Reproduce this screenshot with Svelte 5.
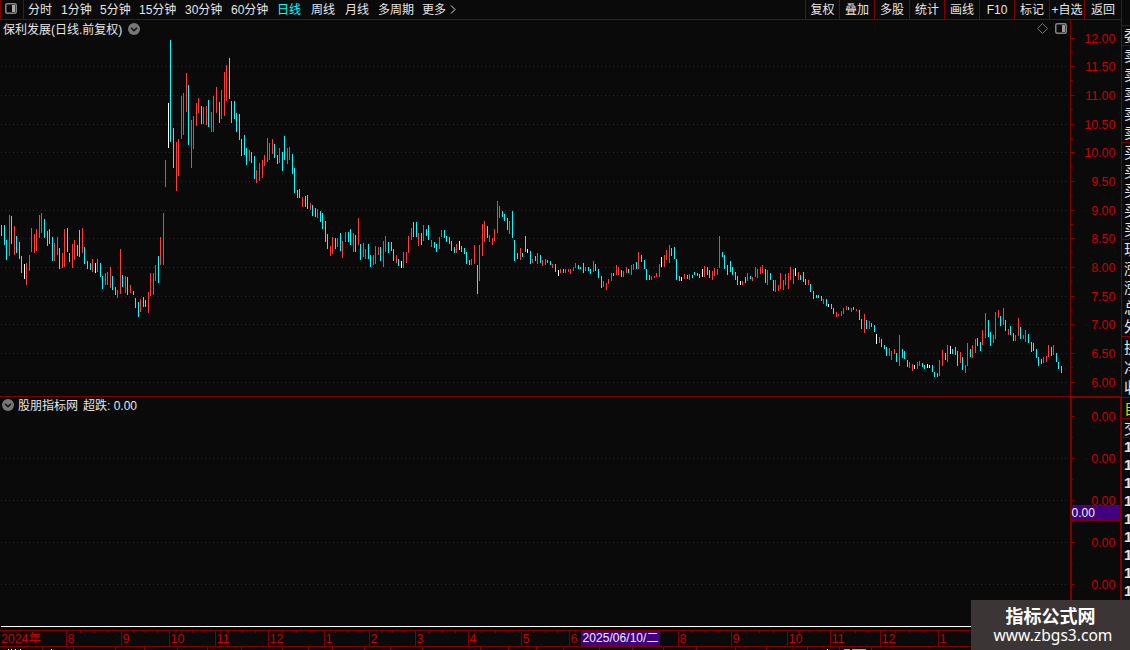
<script lang="ts">
	type Tone = 'u' | 'd' | 'w';

	const periods = [
		{ name: '分时', width: 24, gap: 9 },
		{ name: '1分钟', width: 31, gap: 8 },
		{ name: '5分钟', width: 31, gap: 8 },
		{ name: '15分钟', width: 38, gap: 8 },
		{ name: '30分钟', width: 38, gap: 8 },
		{ name: '60分钟', width: 38, gap: 8 },
		{ name: '日线', width: 24, gap: 10 },
		{ name: '周线', width: 24, gap: 10 },
		{ name: '月线', width: 24, gap: 9 },
		{ name: '多周期', width: 36, gap: 8 },
		{ name: '更多', width: 24, gap: 4 }
	];
	let period = $state('日线');

	const tools = ['复权', '叠加', '多股', '统计', '画线', 'F10', '标记', '+自选', '返回'];

	// high-low per day in chart pixels, then u(p) / d(own) / w(unchanged)
	const series = `
		225-236d 225-245d 240-260d 215-256u 216-244d 226-255u 236-253d 242-259d 256-273d 264-279w
		263-285u 255-271u 228-252u 234-253u 229-251u 215-238u 213-233u 219-238d 231-246d 229-244d
		237-261d 243-261u 237-255u 248-269d 253-268u 229-267u 228-252d 253-262d 244-268u 240-260u
		245-256d 230-257d 228-253u 247-264d 261-269d 263-270d 259-272u 263-273w 259-272u 263-277d
		276-289d 273-285u 272-285u 267-288u 276-290d 287-295d 290-298u 249-294u 275-287d 276-293u
		277-295d 285-293u 291-295d 298-308d 302-317d 299-312u 297-307d 300-307d 292-313u 273-296u
		273-295u 265-281u 256-283d 237-265u 213-265u 160-187u 103-148w 40-142d 128-168d 142-191u
		139-176u 96-139u 93-135u 73-112u 85-145d 120-168u 116-149u 103-126u 98-113u 106-124d
		107-124u 106-125u 100-127d 112-132u 96-132u 87-113u 102-123d 90-119u 72-116u 65-101u
		58-99d 101-123d 101-119d 113-132d 114-140d 139-156d 135-155d 148-165d 150-161u 152-163d
		156-179d 170-183u 163-181u 160-178u 155-166u 138-162u 143-160u 139-154u 144-158d 155-164d
		148-163u 152-171d 136-160d 148-164u 147-160u 154-174d 168-193d 190-198d 189-198d 197-207u
		196-207d 195-209d 203-210u 205-216d 208-217d 209-218u 211-222d 213-229d 221-242d 234-249d
		246-256u 237-254u 238-249d 238-247u 233-251d 241-258u 232-242u 232-242d 229-245d 233-252u
		235-252d 218-245u 244-260d 243-257u 249-259u 244-259d 255-267d 255-265u 246-264u 247-255u
		247-261d 241-267u 236-252u 242-253d 242-251d 249-261d 255-263u 259-266d 261-268w 252-268u
		252-263u 236-253u 228-240u 222-237d 222-237d 233-246u 233-245d 225-241u 229-236d 225-240d
		240-247u 242-248d 244-252d 237-249u 230-237u 230-238d 236-242d 237-244d 241-251d 247-253d
		244-253u 241-250w 246-252d 248-254d 252-264d 260-265d 259-265u 245-264u 265-294d 245-281u
		224-256u 221-242u 226-238d 235-242u 238-245u 229-241u 201-233u 206-218u 211-217d 214-221d
		218-230d 221-234u 211-238d 240-261d 253-259d 248-260u 253-257d 236-252d 249-253w 251-264d
		259-263u 256-261d 253-264u 255-263d 260-266u 259-265u 260-263d 261-265d 264-268u 264-272d
		270-276w 269-273u 269-273d 269-273u 269-272u 269-274u 267-271u 263-268u 265-269d 267-269d
		263-273d 267-271u 267-271d 269-274d 261-272u 264-271d 269-278d 276-288d 281-287u 283-290u
		279-284u 273-281u 273-276d 265-275u 267-275u 270-277d 271-277u 267-273u 269-273d 265-275u
		264-270u 262-269d 252-269u 255-262d 260-269d 269-280d 275-280d 276-280u 276-278u 273-277u
		264-277u 257-267w 255-267u 250-260u 245-263u 248-256d 247-259d 259-280d 276-281d 277-281w
		274-279u 275-279d 274-280u 275-278d 272-275d 273-276d 274-278d 269-277w 266-277u 267-275d
		270-278d 271-280u 268-276u 269-275u 236-268u 252-257d 255-269d 265-275d 261-272d 267-275d
		272-280d 276-285d 281-285w 281-285u 277-283d 273-281u 276-279d 277-281u 267-277u 269-278u
		267-274u 265-273u 269-283d 270-285u 273-280d 280-291d 280-292u 285-291u 273-289u 280-290u
		274-285u 273-289u 267-280u 269-284u 268-276w 272-280u 275-280d 272-282d 279-285d 280-285u
		284-292d 291-299d 295-298d 295-298d 296-301d 299-304u 299-306d 304-307w 304-309d 308-314d
		312-317u 314-316u 311-316u 308-314u 306-310u 307-310d 308-312u 307-310d 309-311u 310-320d
		319-329d 314-333u 320-329d 321-329u 323-327d 325-332d 334-344w 337-343u 339-347d 345-349d
		347-356d 348-356u 351-360u 349-354u 353-362d 335-366u 349-358d 351-359d 360-367d 362-368u
		364-371u 365-369w 362-369u 361-366u 363-367d 365-369d 364-368w 365-368w 365-372d 372-377d
		373-377d 360-376u 350-366u 353-360d 345-362u 346-354w 349-354d 347-355d 351-366d 352-363u
		357-370d 365-373u 343-366u 349-357d 345-358u 339-353u 338-346d 342-351d 330-345u 313-338u
		320-337d 332-346d 335-343u 312-339u 310-318u 316-326d 308-325u 320-331d 329-335u 326-335d
		333-341d 335-341u 318-336u 327-339d 335-339u 330-342u 334-343d 342-352d 343-351d 349-358d
		357-366d 359-364d 357-363u 356-362u 345-357u 347-356d 345-355u 353-362d 362-369d 366-373d`;

	const bars = series.trim().split(/\s+/).map((item, i) => {
		const [high, low] = item.slice(0, -1).split('-').map(Number);
		return {
			x: Math.floor(1.475 + i * 2.52967),
			y: high - 20,
			height: low - high,
			tone: item.slice(-1) as Tone
		};
	});

	const prices = [38, 66, 95, 124, 152, 181, 210, 238, 267, 296, 324, 353, 382].map((y, i) => ({
		y: y - 20,
		label: (12 - i * 0.5).toFixed(2)
	}));
	const levels = [19, 61, 103, 145, 187];

	const months = [
		{ x: 66, label: '8' },
		{ x: 121, label: '9' },
		{ x: 169, label: '10' },
		{ x: 215, label: '11' },
		{ x: 268, label: '12' },
		{ x: 324, label: '1' },
		{ x: 369, label: '2' },
		{ x: 415, label: '3' },
		{ x: 468, label: '4' },
		{ x: 521, label: '5' },
		{ x: 569, label: '6' },
		{ x: 678, label: '8' },
		{ x: 731, label: '9' },
		{ x: 787, label: '10' },
		{ x: 830, label: '11' },
		{ x: 880, label: '12' },
		{ x: 938, label: '1' }
	];
	const weekTicks = months.slice(0, -1).flatMap((m, i) => {
		const step = (months[i + 1].x - m.x) / 4;
		return [1, 2, 3].map((n) => Math.round(m.x + step * n));
	});
	const footCells = [42, 73, 115, 144, 177, 207, 241, 282, 308, 332, 364, 390, 422, 480, 508, 536, 563, 599, 632, 663, 696, 735, 766, 807, 839, 871];

	const quoteGroups = [
		{ rows: ['委'], height: 20 },
		{ rows: ['卖', '卖', '卖', '卖', '卖'], height: 97 },
		{ rows: ['买', '买', '买', '买', '买'], height: 97 },
		{ rows: ['现', '涨', '涨', '总', '外'], height: 97 },
		{ rows: ['换', '净', '收'], height: 61 }
	];
</script>

<div class="app">
	<div class="left">
		<header>
			<div class="layout">
				<svg width="12" height="11" viewBox="0 0 12 11">
					<rect x="0.75" y="0.75" width="10.5" height="9.5" rx="1.5" fill="none" stroke="#858585" stroke-width="1.5" />
					<rect x="7" y="2" width="3" height="7" fill="#aaa" />
				</svg>
			</div>
			<nav>
				{#each periods as p}
					<button
						class:active={period === p.name}
						style="width: {p.width}px; margin-right: {p.gap}px"
						onclick={() => (period = p.name)}>{p.name}</button
					>
				{/each}
				<svg width="6" height="9" viewBox="0 0 6 9"><path d="M1 0.5L5 4.5L1 8.5" fill="none" stroke="#ddd" /></svg>
			</nav>
			<div class="tools">
				{#each tools as tool}
					<button>{tool}</button>
				{/each}
			</div>
		</header>

		<div class="panel price">
			<div class="plot">
				<div class="title">
					<span class="name">保利发展(日线.前复权)</span>
					<svg width="12" height="12" viewBox="0 0 12 12">
						<circle cx="6" cy="6" r="6" fill="#777" />
						<path d="M3 4.7L6 7.7L9 4.7" fill="none" stroke="#111" stroke-width="1.5" />
					</svg>
					<svg class="corner" width="30" height="12" viewBox="0 0 30 12">
						<path d="M5.5 0.5L10.5 5.5L5.5 10.5L0.5 5.5Z" fill="none" stroke="#777" />
						<rect x="18.75" y="0.75" width="10.5" height="9.5" rx="1.5" fill="none" stroke="#858585" stroke-width="1.5" />
						<rect x="25" y="2" width="3" height="7" fill="#999" />
					</svg>
				</div>
				<svg class="chart" width="1070" height="376" shape-rendering="crispEdges">
					{#each prices.slice(1) as p}
						<line class="grid" x1="1" x2="1067" y1={p.y + 0.5} y2={p.y + 0.5} />
					{/each}
					{#each bars as bar}
						<rect class={bar.tone} x={bar.x} y={bar.y} width="1" height={bar.height} />
					{/each}
				</svg>
			</div>
			<svg class="axis" width="51" height="376" shape-rendering="crispEdges">
				<rect width="1" height="376" />
				{#each prices as p, i}
					<rect x="1" y={p.y} width="4" height="1" />
					{#if i < prices.length - 1}
						<rect x="1" y={p.y + 14} width="2" height="1" />
					{/if}
					<text x="45.5" y={p.y + 5} text-anchor="end">{p.label}</text>
				{/each}
			</svg>
		</div>

		<div class="panel indicator">
			<div class="plot">
				<div class="title">
					<svg width="12" height="12" viewBox="0 0 12 12">
						<circle cx="6" cy="6" r="6" fill="#777" />
						<path d="M3 4.7L6 7.7L9 4.7" fill="none" stroke="#111" stroke-width="1.5" />
					</svg>
					<span class="source">股朋指标网</span>
					<span>超跌: 0.00</span>
				</div>
				<svg class="chart" width="1070" height="233" shape-rendering="crispEdges">
					{#each levels.slice(1) as y}
						<line class="grid" x1="1" x2="1067" y1={y + 0.5} y2={y + 0.5} />
					{/each}
					<rect x="1" y="229" width="1069" height="1" fill="#fff" />
				</svg>
			</div>
			<svg class="axis" width="51" height="233" shape-rendering="crispEdges">
				<rect width="2" height="233" />
				<rect width="51" height="1" />
				<rect x="50" width="1" height="233" />
				{#each levels as y}
					<rect x="2" {y} width="3" height="1" />
					<rect x="2" y={y + 21} width="1" height="1" />
					<text x="45.5" y={y + 5} text-anchor="end">0.00</text>
				{/each}
				<rect x="1" y="108" width="49" height="16" fill="#400080" />
				<rect x="1" y="108" width="49" height="1" />
				<rect x="1" y="123" width="49" height="1" />
				<text class="current" x="1.5" y="120">0.00</text>
			</svg>
		</div>

		<svg class="dates" width="1121" height="20" shape-rendering="crispEdges">
			<rect width="1121" height="1" />
			<rect y="16" width="1121" height="1" />
			<text x="1" y="13" textLength="40">2024年</text>
			{#each months as m}
				<rect x={m.x} y="1" width="1" height="15" />
				<text x={m.x + 1.5} y="13">{m.label}</text>
			{/each}
			{#each weekTicks as x}
				<rect {x} y="1" width="1" height="2" />
			{/each}
			{#each footCells as x}
				<rect {x} y="17" width="1" height="3" />
			{/each}
			<rect x="581" y="1" width="79" height="15" fill="#400080" />
			<text class="current" x="582.5" y="12" textLength="76">2025/06/10/二</text>
			<path d="M8 19.5h1M11 19.5h1M15 19.5h1M20 19.5h1M51 19.5h1M827 19.5h1" stroke="#fff" />
			<path d="M844 19.5h6M852 19.5h14" stroke="#00f0f0" />
		</svg>
	</div>

	<aside>
		{#each quoteGroups as group}
			<div class="group" style="height: {group.height}px">
				{#each group.rows as row}
					<span>{row}</span>
				{/each}
			</div>
		{/each}
		<div class="group self"><span>自</span></div>
		<div class="group trade"><span>交</span></div>
		<div class="group ticks">
			{#each Array(9) as _}
				<span>1</span>
			{/each}
		</div>
	</aside>

	<div class="watermark">
		<strong>指标公式网</strong>
		<span>www.zbgs3.com</span>
	</div>
</div>

<style>
	:global(body) {
		background: #0a0a0a;
		overflow: hidden;
	}

	.app {
		position: relative;
		display: flex;
		width: 1130px;
		height: 650px;
		overflow: hidden;
		background: #0a0a0a;
		color: #e6e6e6;
		font: 12px 'Liberation Sans', 'Noto Sans CJK SC', sans-serif;
	}

	.left {
		display: flex;
		flex-direction: column;
		width: 1121px;
	}

	header {
		display: flex;
		box-sizing: border-box;
		height: 20px;
		border-left: 1px solid #800000;
		border-bottom: 1px solid #800000;
	}

	.layout {
		box-sizing: border-box;
		width: 23px;
		padding: 3px 0 0 4px;
		border-right: 1px solid #800000;
	}

	svg {
		display: block;
		flex: none;
	}

	nav {
		display: flex;
		align-items: center;
		padding-left: 4px;
	}

	button {
		padding: 0;
		border: none;
		background: none;
		color: inherit;
		font: inherit;
		line-height: 18px;
		white-space: nowrap;
		cursor: pointer;
	}

	nav button {
		text-align: left;
	}

	nav .active {
		color: #00ffff;
	}

	.tools {
		display: flex;
		margin-left: auto;
	}

	.tools button {
		box-sizing: border-box;
		width: 35px;
		border-left: 1px solid #800000;
	}

	.tools button:first-child {
		width: 34px;
	}

	.tools button:last-child {
		width: 37px;
	}

	.panel {
		display: flex;
	}

	.price {
		height: 376px;
	}

	.indicator {
		height: 233px;
		border-top: 1px solid #800000;
	}

	.plot {
		display: grid;
		width: 1070px;
	}

	.title,
	.chart {
		grid-area: 1 / 1;
	}

	.title {
		display: flex;
		align-items: center;
		height: 18px;
		padding-left: 3px;
		line-height: 18px;
	}

	.title span {
		padding-top: 1px;
	}

	.name {
		width: 125px;
		white-space: nowrap;
	}

	.corner {
		margin: 0 3px 0 auto;
	}

	.indicator .title {
		height: 16px;
		padding-left: 2px;
		line-height: 16px;
	}

	.source {
		width: 61px;
		margin: 0 4px;
	}

	.grid {
		stroke: #700c0c;
		stroke-dasharray: 1 3;
	}

	.u {
		fill: #ff3c3c;
	}

	.d {
		fill: #00ffff;
	}

	.w {
		fill: #fff;
	}

	.axis rect:not([fill]),
	.dates rect:not([fill]) {
		fill: #800000;
	}

	.axis text,
	.dates text {
		fill: #c80000;
		font-size: 12.5px;
	}

	.axis .current,
	.dates .current {
		fill: #f0f0f0;
		font-size: 12px;
	}

	aside {
		box-sizing: border-box;
		width: 9px;
		padding-top: 25px;
		overflow: hidden;
		border-left: 1px solid #800000;
		font-size: 15px;
	}

	.group {
		display: flex;
		flex-direction: column;
		justify-content: space-around;
		box-sizing: border-box;
		width: 24px;
		padding-left: 2px;
		line-height: 19px;
		border-top: 1px solid #800000;
	}

	.self {
		height: 21px;
		color: #d8d800;
	}

	.trade {
		height: 19px;
	}

	.ticks {
		justify-content: flex-start;
		font-weight: bold;
		line-height: 18px;
	}

	.watermark {
		position: absolute;
		right: 0;
		bottom: 0;
		display: flex;
		flex-direction: column;
		align-items: center;
		box-sizing: border-box;
		width: 159px;
		height: 50px;
		padding: 4px 0 0;
		background: #3b3635;
		color: #fff;
	}

	.watermark strong {
		font: bold 18px/22px 'Noto Sans CJK SC', sans-serif;
	}

	.watermark span {
		padding-left: 5px;
		font: 15.6px/19px 'Noto Sans', sans-serif;
	}
</style>
